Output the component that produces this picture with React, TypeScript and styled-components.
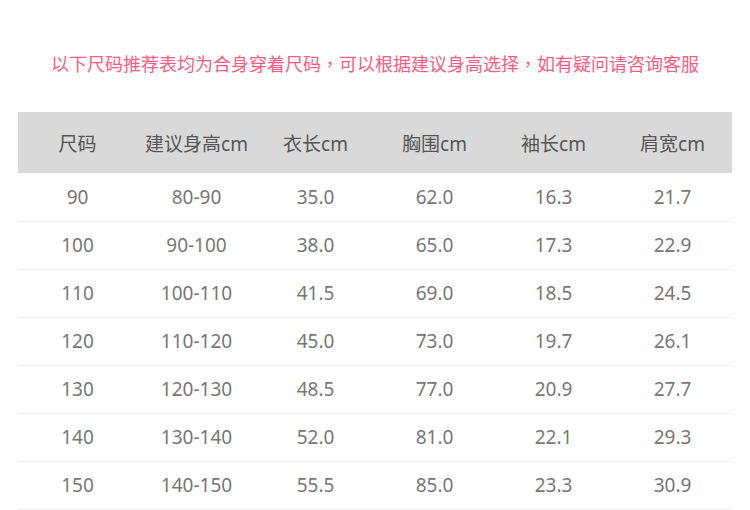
import { createGlobalStyle } from "styled-components";
import styled from "styled-components";

const GlobalStyle = createGlobalStyle`
  html, body {
    margin: 0;
    padding: 0;
    background: #ffffff;
  }
  body {
    font-family: "Noto Sans", "Noto Sans CJK SC", sans-serif;
  }
`;

const Page = styled.div`
  width: 750px;
  padding-top: 50px;
`;

const Notice = styled.p`
  margin: 0;
  height: 26px;
  line-height: 26px;
  text-align: center;
  font-family: "Noto Sans CJK SC", sans-serif;
  font-size: 18px;
  color: #ff5a82;
`;

// centred full-width comma, like the original's font draws it
const Comma = styled.span`
  font-family: "Noto Sans CJK TC", sans-serif;
`;

const SizeTable = styled.table`
  width: 714px;
  margin: 36px 0 0 18px;
  border-collapse: collapse;
  table-layout: fixed;
`;

const HeadRow = styled.tr`
  background-color: #d9d9d9;
  height: 61px;
`;

const HeadCell = styled.th`
  font-weight: 400;
  font-size: 19px;
  color: #555555;
  text-align: center;
  vertical-align: middle;
  padding: 0;
`;

const BodyRow = styled.tr`
  height: 48px;
  border-bottom: 1px solid #ececec;
`;

const BodyCell = styled.td`
  font-size: 19px;
  color: #777777;
  text-align: center;
  vertical-align: middle;
  padding: 0;
`;

const headers = ["尺码", "建议身高cm", "衣长cm", "胸围cm", "袖长cm", "肩宽cm"];

const rows = [
  ["90", "80-90", "35.0", "62.0", "16.3", "21.7"],
  ["100", "90-100", "38.0", "65.0", "17.3", "22.9"],
  ["110", "100-110", "41.5", "69.0", "18.5", "24.5"],
  ["120", "110-120", "45.0", "73.0", "19.7", "26.1"],
  ["130", "120-130", "48.5", "77.0", "20.9", "27.7"],
  ["140", "130-140", "52.0", "81.0", "22.1", "29.3"],
  ["150", "140-150", "55.5", "85.0", "23.3", "30.9"],
];

export default function App() {
  return (
    <Page>
      <GlobalStyle />
      <Notice>
        以下尺码推荐表均为合身穿着尺码<Comma>，</Comma>可以根据建议身高选择<Comma>，</Comma>如有疑问请咨询客服
      </Notice>
      <SizeTable>
        <thead>
          <HeadRow>
            {headers.map((h) => (
              <HeadCell key={h}>{h}</HeadCell>
            ))}
          </HeadRow>
        </thead>
        <tbody>
          {rows.map((r) => (
            <BodyRow key={r[0]}>
              {r.map((v, i) => (
                <BodyCell key={i}>{v}</BodyCell>
              ))}
            </BodyRow>
          ))}
        </tbody>
      </SizeTable>
    </Page>
  );
}
